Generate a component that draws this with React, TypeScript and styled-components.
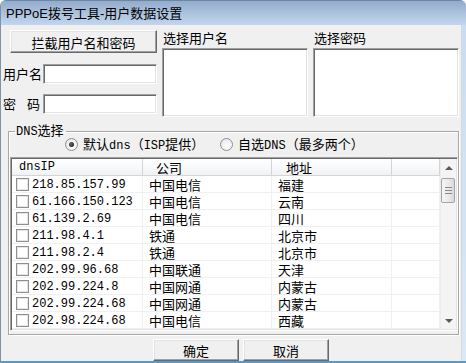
import styled, { createGlobalStyle, css } from "styled-components"

const GlobalStyle = createGlobalStyle`
    html, body {
        margin: 0;
        padding: 0;
        background: #ffffff;
    }
    * {
        box-sizing: border-box;
    }
`

const dnsList = [
    { ip: "218.85.157.99", isp: "中国电信", area: "福建" },
    { ip: "61.166.150.123", isp: "中国电信", area: "云南" },
    { ip: "61.139.2.69", isp: "中国电信", area: "四川" },
    { ip: "211.98.4.1", isp: "铁通", area: "北京市" },
    { ip: "211.98.2.4", isp: "铁通", area: "北京市" },
    { ip: "202.99.96.68", isp: "中国联通", area: "天津" },
    { ip: "202.99.224.8", isp: "中国网通", area: "内蒙古" },
    { ip: "202.99.224.68", isp: "中国网通", area: "内蒙古" },
    { ip: "202.98.224.68", isp: "中国电信", area: "西藏" },
]

// column widths of the list view
const cols = [131, 129, 120, 48]

export default () => {

    return (
        <>
            <GlobalStyle />
            <Window>
                <TitleBar>PPPoE拨号工具-用户数据设置</TitleBar>
                <Client>
                    <TopSection>
                        <LeftCol>
                            <Button $w={147} $h={23} $ml={9}>拦截用户名和密码</Button>
                            <FieldRow $top={11}>
                                <FieldLabel>用户名</FieldLabel>
                                <TextInput />
                            </FieldRow>
                            <FieldRow $top={10}>
                                <FieldLabel $spread>密 码</FieldLabel>
                                <TextInput />
                            </FieldRow>
                        </LeftCol>
                        <PickCol>
                            <PickLabel>选择用户名</PickLabel>
                            <ListBox />
                        </PickCol>
                        <PickCol>
                            <PickLabel>选择密码</PickLabel>
                            <ListBox />
                        </PickCol>
                    </TopSection>

                    <Group>
                        <Legend><Mono>DNS</Mono>选择</Legend>
                        <RadioRow>
                            <RadioItem $w={155}>
                                <Radio $checked />
                                <span>默认<Mono>dns</Mono>（<Mono>ISP</Mono>提供）</span>
                            </RadioItem>
                            <RadioItem>
                                <Radio />
                                <span>自选<Mono>DNS</Mono>（最多两个）</span>
                            </RadioItem>
                        </RadioRow>

                        <ListView>
                            <Table>
                                <HeaderRow>
                                    <HeaderCell $w={cols[0]} $pad={7}><Mono>dnsIP</Mono></HeaderCell>
                                    <HeaderCell $w={cols[1]} $pad={13}>公司</HeaderCell>
                                    <HeaderCell $w={cols[2]} $pad={14}>地址</HeaderCell>
                                    <HeaderCell $w={cols[3]} $pad={0} />
                                </HeaderRow>
                                {dnsList.map((d) => (
                                    <Row key={d.ip}>
                                        <Cell $w={cols[0]} $pad={4}>
                                            <CheckBox />
                                            <IpText>{d.ip}</IpText>
                                        </Cell>
                                        <Cell $w={cols[1]} $pad={6}>{d.isp}</Cell>
                                        <Cell $w={cols[2]} $pad={6}>{d.area}</Cell>
                                        <Cell $w={cols[3]} $pad={0} />
                                    </Row>
                                ))}
                            </Table>
                            <ScrollBar>
                                <ArrowBox><Arrow $up /></ArrowBox>
                                <Thumb>
                                    <Grip /><Grip /><Grip />
                                </Thumb>
                                <Track />
                                <ArrowBox><Arrow /></ArrowBox>
                            </ScrollBar>
                        </ListView>
                    </Group>

                    <Footer>
                        <Button $w={86} $h={22}>确定</Button>
                        <Button $w={86} $h={22} $ml={4}>取消</Button>
                    </Footer>
                </Client>
            </Window>
        </>
    )
}

const uiFont = `"Noto Sans CJK SC", "Liberation Sans", sans-serif`

const raised = css`
    border: 1px solid;
    border-color: #ffffff #696969 #696969 #ffffff;
    box-shadow: inset -1px -1px 0 #a0a0a0, inset 1px 1px 0 #e3e3e3;
`

const sunken = css`
    border: 1px solid;
    border-color: #a0a0a0 #ffffff #ffffff #a0a0a0;
    box-shadow: inset 1px 1px 0 #696969, inset -1px -1px 0 #e3e3e3;
`

const Window = styled.div`
    width: 466px;
    height: 363px;
    display: flex;
    flex-direction: column;
    overflow: hidden;
    background: linear-gradient(180deg, #c8dcf0, #dbe8f5);
    border-left: 1px solid #7f93a8;
    border-bottom: 2px solid #5d97c6;
    border-radius: 6px 6px 0 0;
    font-family: ${uiFont};
    font-size: 13px;
    color: #000;
`

const TitleBar = styled.div`
    height: 25px;
    flex-shrink: 0;
    display: flex;
    align-items: center;
    padding-left: 5px;
    padding-top: 1px;
    border-top: 1px solid #6f86a3;
    background: linear-gradient(180deg, #93accb 0%, #a9c0dc 45%, #c2d6ec 100%);
    font-family: "Liberation Sans", "Noto Sans CJK SC", sans-serif;
    font-size: 13px;
    line-height: 1;
`

const Client = styled.div`
    flex: 1;
    margin-right: 4px;
    margin-bottom: 1px;
    background: #f0f0f0;
    display: flex;
    flex-direction: column;
    border-right: 1px solid #d8d8d8;
`

const Mono = styled.span`
    font-family: "Liberation Mono", monospace;
    font-size: 12px;
`

const TopSection = styled.div`
    display: flex;
    align-items: flex-start;
    padding-top: 5px;
`

const LeftCol = styled.div`
    width: 156px;
    display: flex;
    flex-direction: column;
`

const Button = styled.div<{ $w: number; $h: number; $ml?: number }>`
    ${raised};
    width: ${(p) => p.$w}px;
    height: ${(p) => p.$h}px;
    margin-left: ${(p) => p.$ml ?? 0}px;
    background: #f0f0f0;
    display: flex;
    align-items: center;
    justify-content: center;
    line-height: 1;
    padding-top: 1px;
`

const FieldRow = styled.div<{ $top: number }>`
    display: flex;
    align-items: center;
    margin-top: ${(p) => p.$top}px;
    padding-left: 2px;
`

const FieldLabel = styled.div<{ $spread?: boolean }>`
    width: 40px;
    line-height: 1;
    white-space: pre;
    margin-top: -1px;
    word-spacing: ${(p) => (p.$spread ? "8px" : "0")};
`

const TextInput = styled.div`
    ${sunken};
    width: 114px;
    height: 20px;
    background: #ffffff;
`

const PickCol = styled.div`
    width: 146px;
    margin-left: 5px;
    display: flex;
    flex-direction: column;
`

const PickLabel = styled.div`
    height: 18px;
    line-height: 16px;
    padding-left: 1px;
`

const ListBox = styled.div`
    ${sunken};
    height: 69px;
    background: #ffffff;
`

const Group = styled.fieldset`
    margin: 6px 2px 0 7px;
    padding: 0 0 3px 1px;
    min-inline-size: 0;
    border: 1px solid #a7a7a7;
    box-shadow: inset 1px 1px 0 #ffffff, 1px 1px 0 #ffffff;
`

const Legend = styled.legend`
    margin-left: 5px;
    padding: 0 2px 0 1px;
    line-height: 13px;
`

const RadioRow = styled.div`
    display: flex;
    align-items: center;
    height: 16px;
    margin-top: -3px;
    margin-bottom: 1px;
    padding-left: 55px;
    line-height: 1;
`

const RadioItem = styled.label<{ $w?: number }>`
    display: flex;
    align-items: center;
    gap: 5px;
    ${(p) => (p.$w ? `width: ${p.$w}px;` : "")}
`

const Radio = styled.span<{ $checked?: boolean }>`
    position: relative;
    width: 13px;
    height: 13px;
    flex-shrink: 0;
    border-radius: 50%;
    border: 1px solid #8e8f8f;
    background: radial-gradient(circle at 60% 60%, #ffffff 0%, #f0f0f0 55%, #d6d6d6 100%);

    &::after {
        content: "";
        display: ${(p) => (p.$checked ? "block" : "none")};
        position: absolute;
        left: 3px;
        top: 3px;
        width: 5px;
        height: 5px;
        border-radius: 50%;
        background: radial-gradient(circle at 40% 40%, #6a6a6a, #0c0c0c);
    }
`

const ListView = styled.div`
    ${sunken};
    margin-top: 5px;
    height: 174px;
    display: flex;
    padding: 1px;
    background: #ffffff;
`

const Table = styled.div`
    display: flex;
    flex-direction: column;
`

const HeaderRow = styled.div`
    display: flex;
    height: 17px;
    background: linear-gradient(180deg, #ffffff 0%, #f7f8fa 60%, #f1f2f4 100%);
    border-bottom: 1px solid #d5d5d5;
`

const HeaderCell = styled.div<{ $w: number; $pad: number }>`
    width: ${(p) => p.$w}px;
    padding-left: ${(p) => p.$pad}px;
    border-right: 1px solid #d5d5d5;
    display: flex;
    align-items: center;
    line-height: 1;
`

const Row = styled.div`
    display: flex;
    height: 17px;
    border-bottom: 1px solid #f0f0f0;
`

const Cell = styled.div<{ $w: number; $pad: number }>`
    width: ${(p) => p.$w}px;
    padding-left: ${(p) => p.$pad}px;
    border-right: 1px solid #f0f0f0;
    display: flex;
    align-items: center;
    line-height: 1;
`

const CheckBox = styled.span`
    width: 13px;
    height: 13px;
    flex-shrink: 0;
    margin-right: 3px;
    border: 1px solid #8f8f8f;
    background: #ffffff;
    box-shadow: inset 0 0 0 1px #e6e6e6;
`

const IpText = styled(Mono)`
    padding-top: 1px;
`

const ScrollBar = styled.div`
    width: 17px;
    display: flex;
    flex-direction: column;
    background: #f4f4f4;
    border-left: 1px solid #ececec;
`

const ArrowBox = styled.div`
    height: 17px;
    display: flex;
    align-items: center;
    justify-content: center;
`

const Arrow = styled.span<{ $up?: boolean }>`
    width: 0;
    height: 0;
    border-left: 4px solid transparent;
    border-right: 4px solid transparent;
    ${(p) =>
        p.$up
            ? "border-bottom: 4px solid #5a5a5a;"
            : "border-top: 4px solid #5a5a5a;"}
`

const Thumb = styled.div`
    height: 25px;
    margin: 2px 1px 0 0;
    border: 1px solid #a4a4a4;
    border-radius: 2px;
    background: linear-gradient(90deg, #f6f6f6 0%, #e8e8e8 60%, #d9d9d9 100%);
    display: flex;
    flex-direction: column;
    align-items: center;
    justify-content: center;
    gap: 2px;
`

const Grip = styled.span`
    width: 7px;
    height: 1px;
    background: #8a8a8a;
`

const Track = styled.div`
    flex: 1;
`

const Footer = styled.div`
    display: flex;
    margin-top: 4px;
    padding-left: 152px;
`
